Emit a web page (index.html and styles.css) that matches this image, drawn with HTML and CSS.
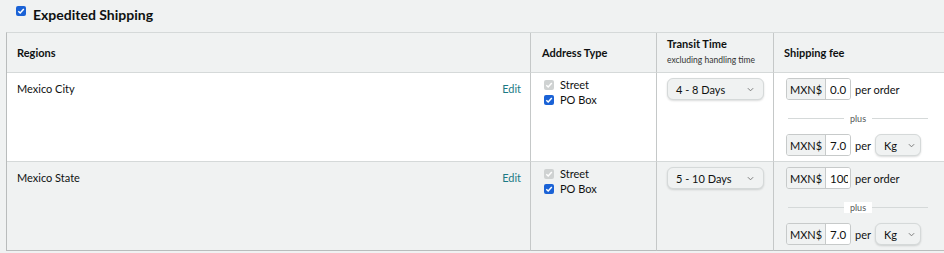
FILE: index.html
```html
<!DOCTYPE html>
<html>
<head>
<meta charset="utf-8">
<link rel="stylesheet" href="styles.css">
</head>
<body>
<div class="page">
  <div class="title">
    <span class="cb cb-on"><svg viewBox="0 0 10 10"><path d="M2.3 5.2 L4.2 7 L7.8 3" fill="none" stroke="#fff" stroke-width="1.5"/></svg></span>
    <span class="title-text">Expedited Shipping</span>
  </div>
  <div class="grid">
    <div class="cell head">Regions</div>
    <div class="cell head">Address Type</div>
    <div class="cell head head-transit"><span>Transit Time</span><span class="sub">excluding handling time</span></div>
    <div class="cell head">Shipping fee</div>

    <div class="cell region white"><span>Mexico City</span><a class="edit">Edit</a></div>
    <div class="cell addr white">
      <label class="chk"><span class="cb cb-off"><svg viewBox="0 0 10 10"><path d="M2.3 5.2 L4.2 7 L7.8 3" fill="none" stroke="#fff" stroke-width="1.5"/></svg></span>Street</label>
      <label class="chk"><span class="cb cb-on"><svg viewBox="0 0 10 10"><path d="M2.3 5.2 L4.2 7 L7.8 3" fill="none" stroke="#fff" stroke-width="1.5"/></svg></span>PO Box</label>
    </div>
    <div class="cell transit white"><div class="select sel-days"><span>4 - 8 Days</span><svg class="chev" viewBox="0 0 8 5"><path d="M1 1 L4 4 L7 1" fill="none" stroke="#777" stroke-width="1.1"/></svg></div></div>
    <div class="cell fee white">
      <div class="fee-row"><div class="money"><span class="cur">MXN$</span><span class="val"><span class="txt">0.0</span></span></div><span class="per">per order</span></div>
      <div class="plus"><span>plus</span></div>
      <div class="fee-row"><div class="money"><span class="cur">MXN$</span><span class="val"><span class="txt">7.0</span></span></div><span class="per">per</span><div class="select sel-kg"><span>Kg</span><svg class="chev" viewBox="0 0 8 5"><path d="M1 1 L4 4 L7 1" fill="none" stroke="#777" stroke-width="1.1"/></svg></div></div>
    </div>

    <div class="cell region last"><span>Mexico State</span><a class="edit">Edit</a></div>
    <div class="cell addr last">
      <label class="chk"><span class="cb cb-off"><svg viewBox="0 0 10 10"><path d="M2.3 5.2 L4.2 7 L7.8 3" fill="none" stroke="#fff" stroke-width="1.5"/></svg></span>Street</label>
      <label class="chk"><span class="cb cb-on"><svg viewBox="0 0 10 10"><path d="M2.3 5.2 L4.2 7 L7.8 3" fill="none" stroke="#fff" stroke-width="1.5"/></svg></span>PO Box</label>
    </div>
    <div class="cell transit last"><div class="select sel-days"><span>5 - 10 Days</span><svg class="chev" viewBox="0 0 8 5"><path d="M1 1 L4 4 L7 1" fill="none" stroke="#777" stroke-width="1.1"/></svg></div></div>
    <div class="cell fee last">
      <div class="fee-row"><div class="money"><span class="cur">MXN$</span><span class="val"><span class="txt">100</span></span></div><span class="per">per order</span></div>
      <div class="plus"><span>plus</span></div>
      <div class="fee-row"><div class="money"><span class="cur">MXN$</span><span class="val"><span class="txt">7.0</span></span></div><span class="per">per</span><div class="select sel-kg"><span>Kg</span><svg class="chev" viewBox="0 0 8 5"><path d="M1 1 L4 4 L7 1" fill="none" stroke="#777" stroke-width="1.1"/></svg></div></div>
    </div>
  </div>
</div>
</body>
</html>
```

FILE: styles.css
```css
html, body {
  margin: 0;
  padding: 0;
  background: #f0f2f2;
  overflow: hidden;
}
body {
  font-family: "Lato", "Liberation Sans", sans-serif;
  color: #0f1111;
  font-size: 11px;
  width: 944px;
  height: 253px;
}
.page {
  padding-left: 6px;
}
.title {
  height: 32px;
  display: flex;
  align-items: flex-start;
  padding-left: 10px;
  box-sizing: border-box;
}
.title .cb {
  margin-top: 6px;
}
.title-text {
  font-weight: bold;
  font-size: 14px;
  margin-left: 7px;
  margin-top: 6px;
  line-height: 18px;
}
.cb {
  display: inline-flex;
  width: 10px;
  height: 10px;
  border-radius: 2px;
  flex: none;
}
.cb svg {
  width: 10px;
  height: 10px;
}
.cb-on {
  background: #1a62d6;
}
.cb-off {
  background: #cfd2d2;
}
.grid {
  display: grid;
  grid-template-columns: 523px 126px 117px 180px;
  grid-template-rows: 40px 89px 89px;
  border-top: 1px solid #d5d9d9;
  border-left: 1px solid #b9bcbc;
  width: 950px;
  box-sizing: border-box;
}
.cell {
  border-bottom: 1px solid #d5d9d9;
  border-left: 1px solid #c5c8c8;
  box-sizing: border-box;
}
.cell:nth-child(4n+1) {
  border-left: none;
}
.head {
  font-weight: bold;
  font-size: 11px;
  padding-left: 10px;
  display: flex;
  align-items: center;
}
.head:nth-child(2) {
  padding-left: 11px;
}
.head-transit {
  flex-direction: column;
  align-items: flex-start;
  justify-content: flex-start;
  padding-top: 4px;
  gap: 5px;
}
.head-transit .sub {
  font-weight: normal;
  font-size: 8.5px;
  color: #333;
}
.white {
  background: #ffffff;
}
.last {
  background: #f0f2f2;
  border-bottom-color: #b9bcbc;
}
.region {
  display: flex;
  justify-content: space-between;
  align-items: flex-start;
  padding: 10px 9px 0 10px;
  line-height: 12px;
}
.edit {
  color: #1b7a85;
}
.addr {
  padding: 6px 0 0 13px;
  display: flex;
  flex-direction: column;
  gap: 3px;
}
.chk {
  display: flex;
  align-items: center;
  gap: 6px;
  line-height: 12px;
}
.transit {
  padding: 5px 0 0 10px;
}
.select {
  display: flex;
  align-items: center;
  justify-content: space-between;
  height: 22px;
  box-sizing: border-box;
  border: 1px solid #d5d9d9;
  border-radius: 6px;
  background: #f0f2f2;
  box-shadow: 0 1px 2px rgba(15, 17, 17, 0.15);
  padding: 0 9px 0 8px;
}
.sel-days {
  width: 97px;
}
.chev {
  width: 7px;
  height: 5px;
}
.fee {
  padding: 5px 0 0 12px;
  display: flex;
  flex-direction: column;
}
.fee-row {
  display: flex;
  align-items: center;
  height: 22px;
}
.money {
  display: flex;
  height: 22px;
  box-sizing: border-box;
  border: 1px solid #c7caca;
  border-radius: 3px;
  overflow: hidden;
}
.cur {
  width: 38px;
  background: #f0f2f2;
  display: flex;
  align-items: center;
  justify-content: center;
  border-right: 1px solid #c7caca;
}
.val {
  width: 24px;
  background: #ffffff;
  display: flex;
  align-items: center;
  padding-left: 4px;
  box-sizing: border-box;
  font-size: 11.5px;
}
.txt {
  display: block;
  width: 18px;
  overflow: hidden;
  white-space: nowrap;
}
.per {
  margin-left: 4px;
}
.sel-kg {
  width: 46px;
  margin-left: 4px;
  padding: 0 5px 0 8px;
}
.plus {
  margin: 8px 16px 0 2px;
  height: 20px;
  display: flex;
  align-items: center;
  justify-content: center;
  position: relative;
  width: 140px;
  font-size: 9px;
  color: #565959;
}
.plus::before {
  content: "";
  position: absolute;
  left: 0;
  right: 0;
  top: 10px;
  border-top: 1px solid #d5d9d9;
}
.plus span {
  position: relative;
  background: #ffffff;
  padding: 0 6px;
}
.fee .fee-row + .plus + .fee-row {
  margin-top: 6px;
}
```
